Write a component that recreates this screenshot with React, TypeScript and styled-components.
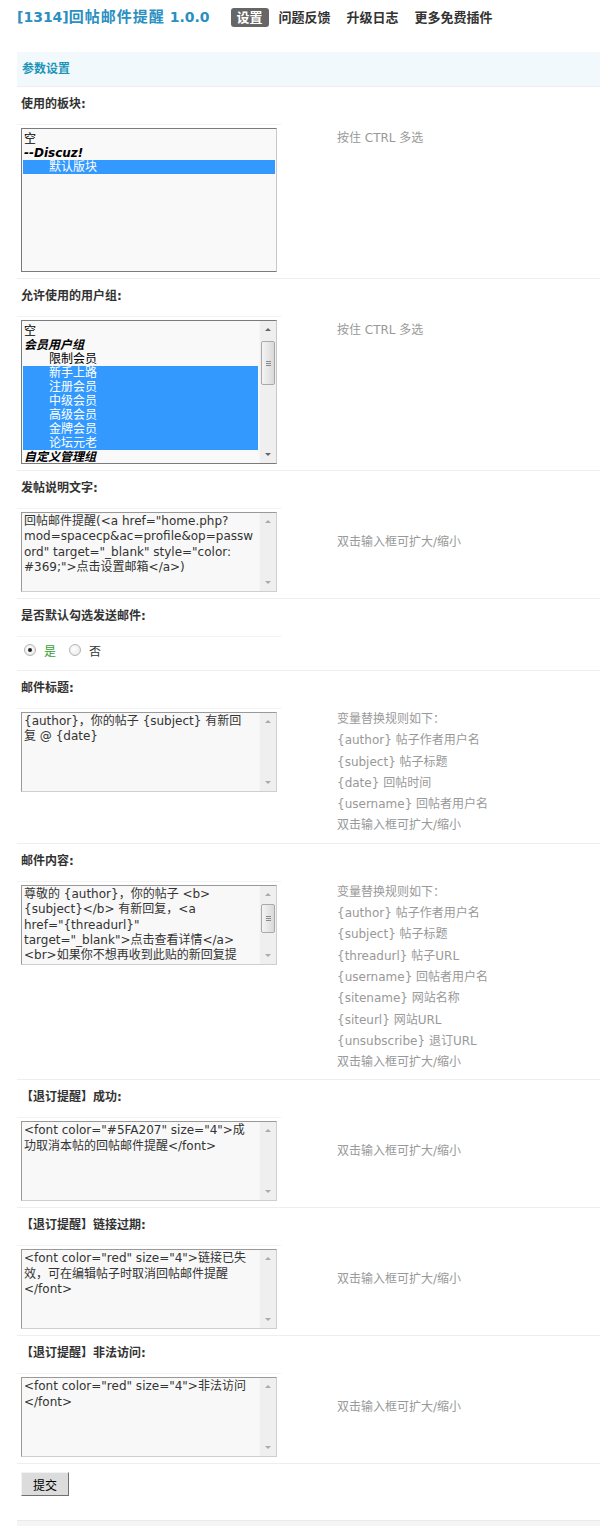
import React from 'react';
import styled, { createGlobalStyle } from 'styled-components';

// ===== ESTILO GLOBAL =====
const GlobalStyle = createGlobalStyle`
  html, body {
    margin: 0;
    padding: 0;
    background: #ffffff;
  }
  body {
    font-family: "DejaVu Sans", "Noto Sans CJK SC", sans-serif;
    font-size: 12px;
    color: #333;
  }
`;

// ===== TIPOS =====
interface OptionItem {
  text: string;
  group?: boolean;
  indent?: boolean;
  selected?: boolean;
}

interface ThumbInfo {
  top: number;
  height: number;
}

type Control =
  | { kind: 'select'; options: OptionItem[]; thumb?: ThumbInfo }
  | { kind: 'textarea'; lines: string[]; thumb?: ThumbInfo }
  | { kind: 'radio' };

interface SettingRow {
  label: string;
  control: Control;
  tips: string[];
  tipOffset: number;
}

// ===== STYLED COMPONENTS =====
const Page = styled.div`
  width: 583px;
  padding-left: 17px;
`;

const Header = styled.div`
  display: flex;
  align-items: center;
  height: 19px;
  padding-top: 8px;
  margin-bottom: 25px;
`;

const Title = styled.h3`
  margin: 0;
  font-size: 14px;
  line-height: 19px;
  font-weight: 700;
  color: #2a8fc1;
  white-space: nowrap;
`;

const TitleCn = styled.span`
  font-size: 15px;
  letter-spacing: 1px;
`;

const Tabs = styled.div`
  display: flex;
  gap: 4px;
  margin-left: 21px;
`;

const Tab = styled.span<{ $active?: boolean }>`
  height: 19px;
  line-height: 19px;
  padding: 0 6px;
  border-radius: 3px;
  font-size: 13px;
  font-weight: 700;
  background: ${p => (p.$active ? '#666666' : 'transparent')};
  color: ${p => (p.$active ? '#ffffff' : '#333333')};
`;

const Band = styled.div`
  height: 34px;
  line-height: 34px;
  padding-left: 5px;
  background: #f2f9fd;
  color: #1d95b9;
  font-weight: 700;
`;

const Row = styled.div`
  border-top: 1px solid #eeeeee;
`;

const Label = styled.div`
  padding: 8px 4px 11px;
  line-height: 18px;
  font-weight: 700;
  color: #333;
`;

const Controls = styled.div`
  display: grid;
  grid-template-columns: 264px 1fr;
`;

const Field = styled.div`
  border-top: 1px solid #f3f3f3;
  padding: 3px 4px 6px;
`;

const TipCell = styled.div`
  padding: 4px 0 6px 56px;
`;

const TipBlock = styled.div<{ $offset: number }>`
  margin-top: ${p => p.$offset}px;
`;

const TipLine = styled.div`
  line-height: 21.3px;
  color: #999;
  white-space: nowrap;
`;

const ListBox = styled.div`
  display: flex;
  width: 256px;
  height: 144px;
  box-sizing: border-box;
  border: 1px solid #7a7a7a;
  border-right-color: #c8c8c8;
  background: #f9f9f9;
  overflow: hidden;
`;

const Options = styled.div`
  flex: 1;
  min-width: 0;
  padding: 3px 1px 0;
  overflow: hidden;
`;

const Option = styled.div<{ $selected?: boolean; $group?: boolean; $indent?: boolean }>`
  height: 14px;
  line-height: 14px;
  padding-left: ${p => (p.$indent ? '26px' : '1px')};
  white-space: nowrap;
  background: ${p => (p.$selected ? '#3399ff' : 'transparent')};
  color: ${p => (p.$selected ? '#ffffff' : '#000000')};
  font-weight: ${p => (p.$group ? 700 : 400)};
  font-style: ${p => (p.$group ? 'italic' : 'normal')};
`;

const TextBox = styled.div`
  display: flex;
  width: 256px;
  height: 80px;
  box-sizing: border-box;
  border: 1px solid;
  border-color: #999 #cfcfcf #cfcfcf #999;
  background: #f8f8f8;
  overflow: hidden;
`;

const TextContent = styled.div`
  flex: 1;
  min-width: 0;
  padding: 1px 2px 0;
  line-height: 15.4px;
  color: #333;
  white-space: nowrap;
  overflow: hidden;
`;

const ScrollBar = styled.div`
  flex: none;
  width: 17px;
  display: flex;
  flex-direction: column;
  background: #efefef;
  border-left: 1px solid #f6f6f6;
  box-sizing: border-box;
`;

const Arrow = styled.div<{ $down?: boolean; $dark?: boolean }>`
  flex: none;
  height: 17px;
  display: flex;
  align-items: center;
  justify-content: center;

  &::before {
    content: '';
    border-left: 3px solid transparent;
    border-right: 3px solid transparent;
    ${p =>
      p.$down
        ? `border-top: 3px solid ${p.$dark ? '#666' : '#aaa'};`
        : `border-bottom: 3px solid ${p.$dark ? '#666' : '#aaa'};`}
  }
`;

const Track = styled.div`
  flex: 1;
`;

const Thumb = styled.div<{ $top: number; $height: number }>`
  margin: ${p => p.$top}px 1px 0;
  height: ${p => p.$height}px;
  box-sizing: border-box;
  border: 1px solid #a9a9a9;
  border-radius: 2px;
  background: linear-gradient(to right, #f4f4f4, #d9d9d9);
  display: flex;
  align-items: center;
  justify-content: center;
`;

const Grip = styled.span`
  width: 5px;
  height: 5px;
  background: repeating-linear-gradient(#8a8a8a 0 1px, transparent 1px 2px);
`;

const RadioGroup = styled.div`
  display: flex;
  align-items: center;
  height: 24px;
  padding-bottom: 4px;
  box-sizing: border-box;
`;

const RadioDot = styled.span<{ $checked?: boolean }>`
  width: 12px;
  height: 12px;
  box-sizing: border-box;
  margin: 0 8px 0 3px;
  border: 1px solid #b4b4b4;
  border-radius: 50%;
  background: radial-gradient(circle at 40% 40%, #ffffff, #e4e4e4);
  display: flex;
  align-items: center;
  justify-content: center;

  &::after {
    content: '';
    display: ${p => (p.$checked ? 'block' : 'none')};
    width: 4px;
    height: 4px;
    border-radius: 50%;
    background: #222;
  }
`;

const RadioLabel = styled.span<{ $checked?: boolean }>`
  margin-right: 10px;
  color: ${p => (p.$checked ? '#33a033' : '#333')};
`;

const ButtonRow = styled.div`
  border-top: 1px solid #eeeeee;
  padding: 8px 4px 24px;
`;

const SubmitButton = styled.button`
  width: 48px;
  height: 24px;
  padding: 0;
  border: 1px solid;
  border-color: #f2f2f2 #707070 #707070 #f2f2f2;
  background: #dcdcdc;
  color: #000;
  font-family: "DejaVu Sans", "Noto Sans CJK SC", sans-serif;
  font-size: 12px;
`;

const Footer = styled.div`
  height: 5px;
  border-top: 1px solid #eaeaea;
  background: #f5f5f5;
`;

// ===== DADOS =====
const editTip = '双击输入框可扩大/缩小';

const rows: SettingRow[] = [
  {
    label: '使用的板块:',
    control: {
      kind: 'select',
      options: [
        { text: '空' },
        { text: '--Discuz!', group: true },
        { text: '默认版块', indent: true, selected: true }
      ]
    },
    tips: ['按住  CTRL 多选'],
    tipOffset: 0
  },
  {
    label: '允许使用的用户组:',
    control: {
      kind: 'select',
      thumb: { top: 3, height: 44 },
      options: [
        { text: '空' },
        { text: '会员用户组', group: true },
        { text: '限制会员', indent: true },
        { text: '新手上路', indent: true, selected: true },
        { text: '注册会员', indent: true, selected: true },
        { text: '中级会员', indent: true, selected: true },
        { text: '高级会员', indent: true, selected: true },
        { text: '金牌会员', indent: true, selected: true },
        { text: '论坛元老', indent: true, selected: true },
        { text: '自定义管理组', group: true }
      ]
    },
    tips: ['按住  CTRL 多选'],
    tipOffset: 0
  },
  {
    label: '发帖说明文字:',
    control: {
      kind: 'textarea',
      lines: [
        '回帖邮件提醒(<a href="home.php?',
        'mod=spacecp&ac=profile&op=passw',
        'ord" target="_blank" style="color:',
        '#369;">点击设置邮箱</a>)'
      ]
    },
    tips: [editTip],
    tipOffset: 20
  },
  {
    label: '是否默认勾选发送邮件:',
    control: { kind: 'radio' },
    tips: [],
    tipOffset: 0
  },
  {
    label: '邮件标题:',
    control: {
      kind: 'textarea',
      lines: ['{author}，你的帖子 {subject} 有新回', '复 @ {date}']
    },
    tips: [
      '变量替换规则如下：',
      '{author} 帖子作者用户名',
      '{subject} 帖子标题',
      '{date} 回帖时间',
      '{username} 回帖者用户名',
      editTip
    ],
    tipOffset: -3
  },
  {
    label: '邮件内容:',
    control: {
      kind: 'textarea',
      thumb: { top: 1, height: 29 },
      lines: [
        '尊敬的 {author}，你的帖子 <b>',
        '{subject}</b> 有新回复，<a',
        'href="{threadurl}"',
        'target="_blank">点击查看详情</a>',
        '<br>如果你不想再收到此贴的新回复提'
      ]
    },
    tips: [
      '变量替换规则如下：',
      '{author} 帖子作者用户名',
      '{subject} 帖子标题',
      '{threadurl} 帖子URL',
      '{username} 回帖者用户名',
      '{sitename} 网站名称',
      '{siteurl} 网站URL',
      '{unsubscribe} 退订URL',
      editTip
    ],
    tipOffset: -3
  },
  {
    label: '【退订提醒】成功:',
    control: {
      kind: 'textarea',
      lines: ['<font color="#5FA207" size="4">成', '功取消本帖的回帖邮件提醒</font>']
    },
    tips: [editTip],
    tipOffset: 20
  },
  {
    label: '【退订提醒】链接过期:',
    control: {
      kind: 'textarea',
      lines: [
        '<font color="red" size="4">链接已失',
        '效，可在编辑帖子时取消回帖邮件提醒',
        '</font>'
      ]
    },
    tips: [editTip],
    tipOffset: 20
  },
  {
    label: '【退订提醒】非法访问:',
    control: {
      kind: 'textarea',
      lines: ['<font color="red" size="4">非法访问', '</font>']
    },
    tips: [editTip],
    tipOffset: 20
  }
];

// ===== COMPONENTES =====
const FakeScrollBar: React.FC<{ thumb?: ThumbInfo; dark?: boolean }> = ({ thumb, dark }) => (
  <ScrollBar>
    <Arrow $dark={dark} />
    <Track>
      {thumb && (
        <Thumb $top={thumb.top} $height={thumb.height}>
          <Grip />
        </Thumb>
      )}
    </Track>
    <Arrow $down $dark={dark} />
  </ScrollBar>
);

const renderControl = (control: Control) => {
  switch (control.kind) {
    case 'select':
      return (
        <ListBox>
          <Options>
            {control.options.map((opt, i) => (
              <Option key={i} $selected={opt.selected} $group={opt.group} $indent={opt.indent}>
                {opt.text}
              </Option>
            ))}
          </Options>
          {control.thumb && <FakeScrollBar thumb={control.thumb} dark />}
        </ListBox>
      );
    case 'textarea':
      return (
        <TextBox>
          <TextContent>
            {control.lines.map((line, i) => (
              <div key={i}>{line}</div>
            ))}
          </TextContent>
          <FakeScrollBar thumb={control.thumb} />
        </TextBox>
      );
    case 'radio':
      return (
        <RadioGroup>
          <RadioDot $checked />
          <RadioLabel $checked>是</RadioLabel>
          <RadioDot />
          <RadioLabel>否</RadioLabel>
        </RadioGroup>
      );
    default:
      return null;
  }
};

export default function App() {
  return (
    <>
      <GlobalStyle />
      <Page>
        <Header>
          <Title>
            [1314]<TitleCn>回帖邮件提醒</TitleCn> 1.0.0
          </Title>
          <Tabs>
            <Tab $active>设置</Tab>
            <Tab>问题反馈</Tab>
            <Tab>升级日志</Tab>
            <Tab>更多免费插件</Tab>
          </Tabs>
        </Header>

        <Band>参数设置</Band>

        {rows.map(row => (
          <Row key={row.label}>
            <Label>{row.label}</Label>
            <Controls>
              <Field>{renderControl(row.control)}</Field>
              <TipCell>
                <TipBlock $offset={row.tipOffset}>
                  {row.tips.map((tip, i) => (
                    <TipLine key={i}>{tip}</TipLine>
                  ))}
                </TipBlock>
              </TipCell>
            </Controls>
          </Row>
        ))}

        <ButtonRow>
          <SubmitButton type="button">提交</SubmitButton>
        </ButtonRow>
        <Footer />
      </Page>
    </>
  );
}
